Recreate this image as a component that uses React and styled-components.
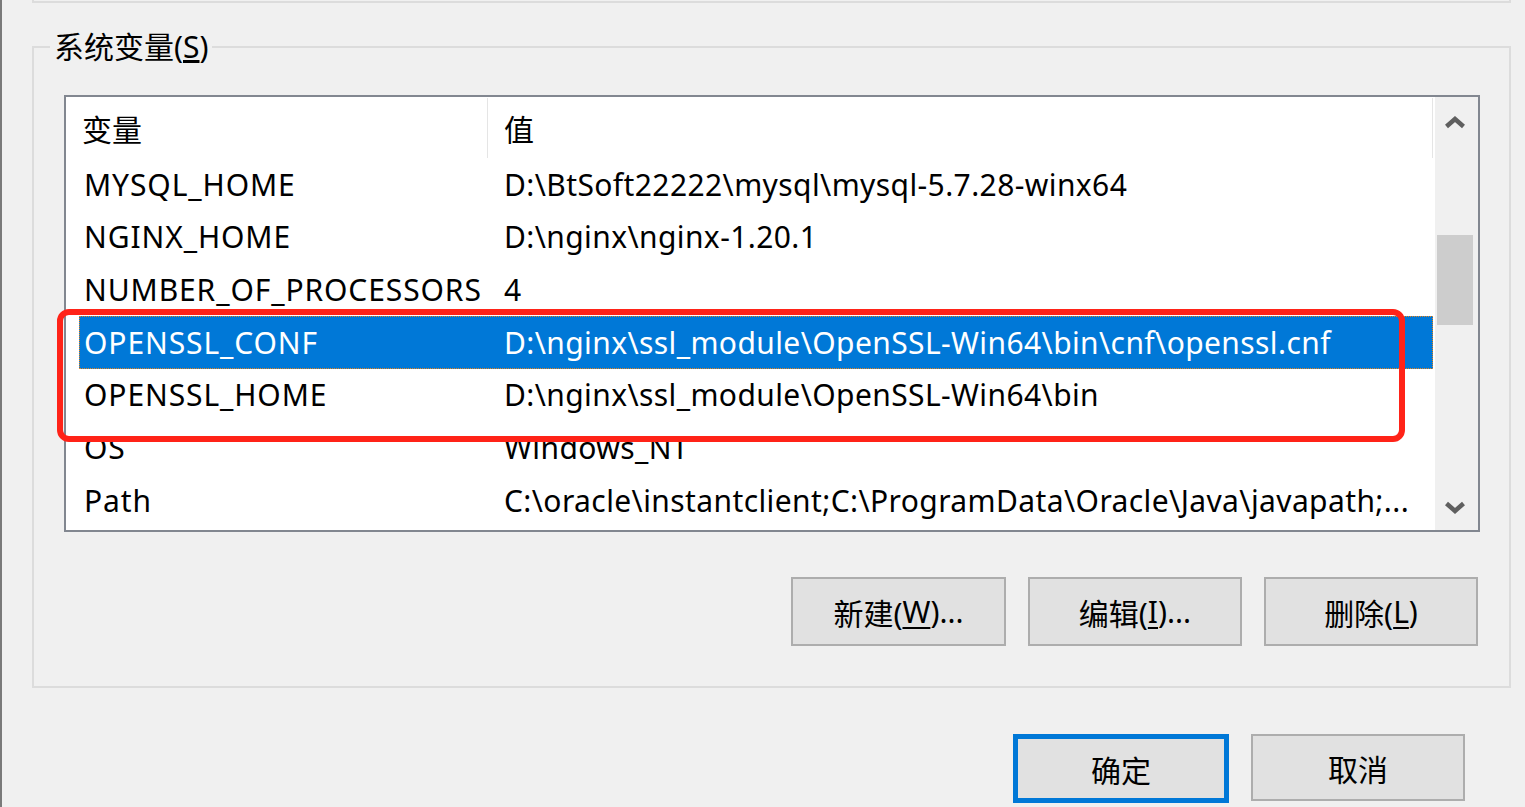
import React from "react";
import styled, { createGlobalStyle } from "styled-components";

const Global = createGlobalStyle`
  html, body { margin: 0; padding: 0; background: #f0f0f0; overflow: hidden; }
  * { box-sizing: border-box; }
`;

const FONT = `"Noto Sans", "Noto Sans CJK SC", sans-serif`;

const Page = styled.div`
  position: relative;
  width: 1525px;
  height: 807px;
  background: #f0f0f0;
  border-left: 2px solid #7a7a7a;
  font-family: ${FONT};
  font-size: 30px;
  color: #000;
  overflow: hidden;
`;

const TopStub = styled.div`
  margin-left: 30px;
  width: 1479px;
  height: 3px;
  border: 2px solid #dcdcdc;
  border-top: none;
`;

const Group = styled.fieldset`
  margin: 24px 14px 0 30px;
  padding: 0 0 40px 0;
  border: 2px solid #dcdcdc;
  min-width: 0;
`;

const Legend = styled.legend`
  margin-left: 16px;
  padding: 0 4px;
  line-height: 40px;
  height: 40px;
`;

const ListBox = styled.div`
  margin: 28px 29px 0 30px;
  height: 437px;
  border: 2px solid #828790;
  background: #fff;
  display: grid;
  grid-template-columns: 1fr 43px;
`;

const ListMain = styled.div`
  display: flex;
  flex-direction: column;
  overflow: hidden;
`;

const Header = styled.div`
  display: grid;
  grid-template-columns: 422px 945px 1fr;
  height: 61px;
  padding-top: 1px;
`;

const HeaderCell = styled.div`
  display: flex;
  align-items: center;
  padding-left: 16px;
  border-right: ${(p) => (p.$divider ? "1px solid #e5e5e5" : "none")};
`;

const Row = styled.div`
  display: grid;
  grid-template-columns: 420px 1fr;
  height: 52.67px;
  margin: 0 2px 0 13px;
  align-items: center;
  white-space: nowrap;
  background: ${(p) => (p.$selected ? "#0078d7" : "transparent")};
  color: ${(p) => (p.$selected ? "#fff" : "#000")};
  outline: ${(p) => (p.$selected ? "1px dotted #e8841c" : "none")};
  outline-offset: -1px;
`;

const Cell = styled.div`
  padding-left: 5px;
  overflow: hidden;
  letter-spacing: ${(p) => (p.$name ? "0.9px" : "0.4px")};
`;

const ScrollBar = styled.div`
  background: #f0f0f0;
  display: flex;
  flex-direction: column;
`;

const ArrowBtn = styled.div`
  height: ${(p) => p.$h}px;
  display: flex;
  align-items: center;
  justify-content: center;
  padding-right: 4px;
`;

const Track = styled.div`
  flex: 1;
  padding: 0 5px 0 2px;
`;

const Thumb = styled.div`
  margin-top: ${(p) => p.$top}px;
  height: ${(p) => p.$size}px;
  background: #cdcdcd;
`;

const ButtonRow = styled.div`
  display: flex;
  justify-content: flex-end;
  gap: 22px;
  margin: 45px 31px 0 0;
`;

const Button = styled.button`
  width: ${(p) => p.$w || 214}px;
  height: ${(p) => p.$h || 69}px;
  background: #e1e1e1;
  border: ${(p) => (p.$default ? "5px solid #0078d7" : "2px solid #adadad")};
  font-family: ${FONT};
  font-size: 30px;
  color: #000;
  padding: 0;
  display: flex;
  align-items: center;
  justify-content: center;
  u { text-decoration-thickness: 2px; text-underline-offset: 4px; }
`;

const Footer = styled.div`
  display: flex;
  justify-content: flex-end;
  align-items: flex-start;
  gap: 22px;
  margin-top: 46px;
  padding-right: 60px;
`;

const Annotation = styled.div`
  position: absolute;
  left: 55px;
  top: 309px;
  width: 1348px;
  height: 133px;
  border: 6px solid #ff2318;
  border-radius: 12px;
  pointer-events: none;
`;

const Chevron = ({ down }) => (
  <svg width="22" height="13" viewBox="0 0 22 13">
    <path
      d={down ? "M2.5 2.5 L11 10 L19.5 2.5" : "M2.5 10.5 L11 3 L19.5 10.5"}
      fill="none"
      stroke="#5f5f5f"
      strokeWidth="4.5"
    />
  </svg>
);

const rows = [
  ["MYSQL_HOME", "D:\\BtSoft22222\\mysql\\mysql-5.7.28-winx64"],
  ["NGINX_HOME", "D:\\nginx\\nginx-1.20.1"],
  ["NUMBER_OF_PROCESSORS", "4"],
  ["OPENSSL_CONF", "D:\\nginx\\ssl_module\\OpenSSL-Win64\\bin\\cnf\\openssl.cnf"],
  ["OPENSSL_HOME", "D:\\nginx\\ssl_module\\OpenSSL-Win64\\bin"],
  ["OS", "Windows_NT"],
  ["Path", "C:\\oracle\\instantclient;C:\\ProgramData\\Oracle\\Java\\javapath;..."],
];

export default function App() {
  return (
    <>
      <Global />
      <Page>
        <TopStub />
        <Group>
          <Legend>
            系统变量(<u>S</u>)
          </Legend>
          <ListBox>
            <ListMain>
              <Header>
                <HeaderCell $divider>变量</HeaderCell>
                <HeaderCell $divider>值</HeaderCell>
                <HeaderCell />
              </Header>
              {rows.map(([name, value], i) => (
                <Row key={name} $selected={i === 3}>
                  <Cell $name>{name}</Cell>
                  <Cell>{value}</Cell>
                </Row>
              ))}
            </ListMain>
            <ScrollBar>
              <ArrowBtn $h={50}>
                <Chevron />
              </ArrowBtn>
              <Track>
                <Thumb $top={88} $size={90} />
              </Track>
              <ArrowBtn $h={46}>
                <Chevron down />
              </ArrowBtn>
            </ScrollBar>
          </ListBox>
          <ButtonRow>
            <Button $w={215}>
              新建(<u>W</u>)...
            </Button>
            <Button>
              编辑(<u>I</u>)...
            </Button>
            <Button>
              删除(<u>L</u>)
            </Button>
          </ButtonRow>
        </Group>
        <Footer>
          <Button $w={216} $default>
            确定
          </Button>
          <Button $h={67}>取消</Button>
        </Footer>
        <Annotation />
      </Page>
    </>
  );
}
